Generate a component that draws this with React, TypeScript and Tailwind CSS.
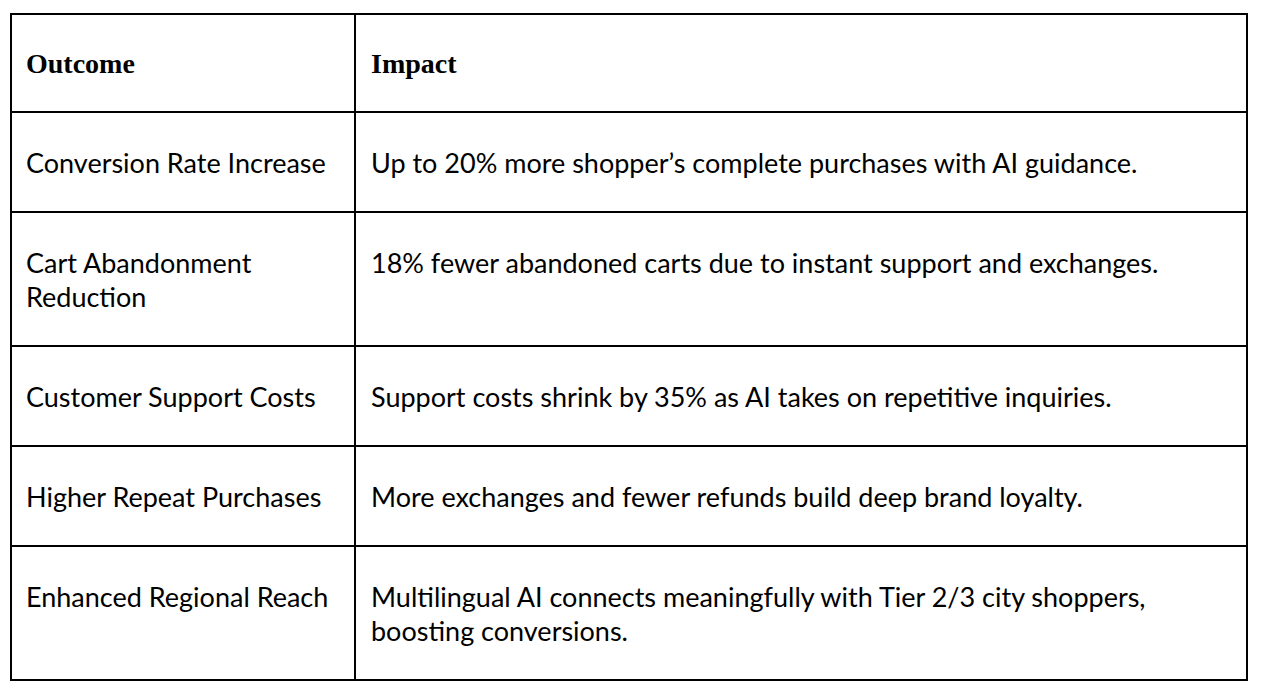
import React from 'react';

const rows: { outcome: string[]; impact: string[] }[] = [
  {
    outcome: ['Conversion Rate Increase'],
    impact: ['Up to 20% more shopper\u2019s complete purchases with AI guidance.'],
  },
  {
    outcome: ['Cart Abandonment', 'Reduction'],
    impact: ['18% fewer abandoned carts due to instant support and exchanges.'],
  },
  {
    outcome: ['Customer Support Costs'],
    impact: ['Support costs shrink by 35% as AI takes on repetitive inquiries.'],
  },
  {
    outcome: ['Higher Repeat Purchases'],
    impact: ['More exchanges and fewer refunds build deep brand loyalty.'],
  },
  {
    outcome: ['Enhanced Regional Reach'],
    impact: [
      'Multilingual AI connects meaningfully with Tier 2/3 city shoppers,',
      'boosting conversions.',
    ],
  },
];

const bodyFont = "font-['Lato','Liberation_Sans',sans-serif]";

export default function App() {
  return (
    <div className="w-[1262px] h-[692px] bg-white pt-[13px] pl-[10px]">
      <div className="w-[1238px] border-2 border-black text-black">
        {/* Header */}
        <div className="grid grid-cols-[344px_1fr] h-[96px]">
          <div className="border-r-2 border-black flex items-center pl-[14px] pt-[1px]">
            <span className="font-['Liberation_Serif',serif] font-bold text-[28px]">Outcome</span>
          </div>
          <div className="flex items-center pl-[15px] pt-[1px]">
            <span className="font-['Liberation_Serif',serif] font-bold text-[28px]">Impact</span>
          </div>
        </div>

        {rows.map((row, i) => (
          <div key={i} className="grid grid-cols-[344px_1fr] border-t-2 border-black">
            <div
              className={`border-r-2 border-black pl-[14px] pt-[33px] pb-[31px] text-[27px] leading-[34px] ${bodyFont}`}
            >
              {row.outcome.map((line) => (
                <div key={line}>{line}</div>
              ))}
            </div>
            <div className={`pl-[15px] pt-[33px] pb-[31px] text-[27px] leading-[34px] ${bodyFont}`}>
              {row.impact.map((line) => (
                <div key={line}>{line}</div>
              ))}
            </div>
          </div>
        ))}
      </div>
    </div>
  );
}
